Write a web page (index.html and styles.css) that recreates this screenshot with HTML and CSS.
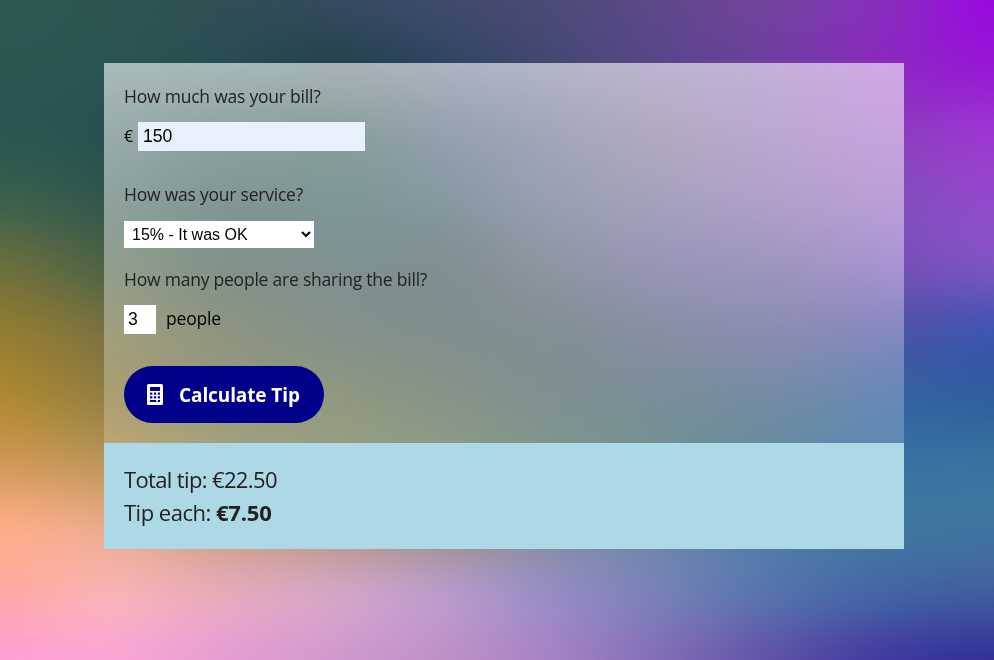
FILE: index.html
```html
<!DOCTYPE html>
<html lang="en">
<head>
<meta charset="utf-8">
<title>Tip Calculator</title>
<link rel="stylesheet" href="styles.css">
</head>
<body>
<canvas class="backdrop" width="994" height="660"></canvas>
<main class="calculator">
  <form class="form">
    <label class="label" for="bill">How much was your bill?</label>
    <div class="row row-bill"><span class="currency">€</span><input class="input input-bill" id="bill" type="text" value="150"></div>
    <label class="label label-service" for="service">How was your service?</label>
    <div class="row row-service">
      <select class="select" id="service"><option>15% - It was OK</option></select>
    </div>
    <label class="label label-share" for="people">How many people are sharing the bill?</label>
    <div class="row row-people"><input class="input input-people" id="people" type="text" value="3"><span class="people">people</span></div>
    <button class="button" type="button">
      <svg class="icon" viewBox="0 0 16 21" width="16" height="21" aria-hidden="true">
        <path fill="#fff" fill-rule="evenodd" d="M1.6 0h12.8A1.6 1.6 0 0 1 16 1.6v17.8a1.6 1.6 0 0 1-1.6 1.6H1.6A1.6 1.6 0 0 1 0 19.4V1.6A1.6 1.6 0 0 1 1.6 0zM3 3v4h10V3zM3 8.5v2.2h2.4v-2.2zM7 8.5v2.2h2.2v-2.2zM10.8 8.5v2.2H13v-2.2zM3 12.3v2.2h2.4v-2.2zM7 12.3v2.2h2.2v-2.2zM10.8 12.3v2.2H13v-2.2zM3 16v2h6.2v-2zM10.8 16v2H13v-2z"/>
      </svg>
      <span class="button-text">Calculate Tip</span>
    </button>
  </form>
  <section class="results">
    <p class="result"><span class="total">Total tip: €22.50</span></p>
    <p class="result"><span class="each">Tip each: </span><strong class="amount">€7.50</strong></p>
  </section>
</main>
<script src="backdrop.js"></script>
</body>
</html>
```
FILE: styles.css
```css
* { box-sizing: border-box; }
body { margin: 0; height: 660px; overflow: hidden; background: #5d6788; font-family: "Open Sans", "Noto Sans", sans-serif; }
.backdrop { position: absolute; inset: 0; z-index: -1; width: 100%; height: 100%; }
.calculator { width: 800px; margin: 63px 0 0 104px; }
.form { height: 380px; padding: 20px; display: flex; flex-direction: column; align-items: flex-start; background: linear-gradient(rgba(255,255,255,.6), rgba(255,255,255,.2)); }
.label { height: 27px; line-height: 27px; font-size: 17.5px; font-weight: 400; letter-spacing: -.22px; color: #222; white-space: nowrap; }
.row { display: flex; align-items: center; font-size: 17.5px; color: #000; }
.row-bill { height: 29px; margin-top: 12px; }
.currency { width: 14px; font-size: 16px; padding-bottom: 2px; }
.input { height: 29px; border: 0; padding: 0 5px; font: 17.6px "Liberation Sans", sans-serif; color: #000; background: #fff; }
.input-bill { width: 227px; background: #e8f0fe; }
.label-service { margin-top: 30px; }
.row-service { height: 27px; margin-top: 13px; }
.select { width: 190px; height: 27px; border: 0; border-radius: 0; padding: 0 4px; font: 16px "Liberation Sans", sans-serif; color: #000; background: #fff; }
.label-share { margin-top: 18px; }
.row-people { height: 29px; margin-top: 12px; }
.input-people { width: 32px; padding: 0 4px; }
.people { margin-left: 10px; padding-bottom: 3px; letter-spacing: -.2px; }
.button { width: 200px; height: 57px; margin-top: 32px; padding: 0 0 0 23px; display: flex; flex: none; align-items: center; border: 0; border-radius: 29px; background: #00008b; color: #fff; font: 700 19px "Open Sans", "Noto Sans", sans-serif; letter-spacing: -.1px; white-space: nowrap; }
.icon { flex: none; margin-right: 16px; }
.results { height: 106px; padding: 20px; background: #add8e6; }
.result { margin: 0; height: 33px; line-height: 33px; font-size: 22px; color: #222; white-space: pre; }
.total { letter-spacing: -.64px; }
.each { letter-spacing: -.5px; }
.amount { letter-spacing: -.2px; }
```
FILE: backdrop.js
```js
// Colour mesh: evenly spaced control colours, 10 columns by 11 rows.
const mesh = [
  [[46,88,84],[45,85,82],[48,78,84],[52,74,94],[62,75,106],[75,74,120],[95,72,138],[115,65,158],[135,45,190],[152,10,222]],
  [[43,86,82],[42,84,82],[38,76,80],[34,66,76],[46,68,96],[66,72,115],[90,70,138],[110,62,160],[138,42,190],[150,24,213]],
  [[43,86,82],[38,80,77],[20,62,58],[10,55,50],[29,59,84],[60,71,107],[92,75,128],[113,71,156],[135,62,187],[156,54,208]],
  [[60,96,74],[48,85,76],[26,65,61],[21,65,65],[34,67,83],[65,80,113],[89,83,135],[113,80,157],[128,78,182],[146,72,204]],
  [[105,110,62],[75,98,68],[51,80,64],[47,77,75],[47,74,80],[70,84,105],[87,84,136],[97,84,149],[113,80,178],[125,84,192]],
  [[145,124,50],[118,113,65],[89,101,69],[74,95,83],[69,92,89],[71,92,101],[79,92,123],[83,89,142],[77,83,162],[65,85,175]],
  [[175,136,50],[145,127,68],[120,120,82],[108,119,86],[94,114,95],[84,108,109],[78,105,121],[70,102,135],[55,98,158],[48,94,160]],
  [[208,152,85],[185,150,90],[150,145,98],[132,140,105],[120,135,112],[103,128,118],[85,122,128],[68,115,140],[58,112,160],[58,114,160]],
  [[252,172,135],[232,170,140],[200,158,135],[180,150,135],[155,145,138],[130,140,155],[105,132,165],[78,124,165],[65,118,158],[64,116,160]],
  [[255,168,165],[248,178,180],[230,170,185],[212,165,195],[185,155,200],[150,140,195],[118,128,182],[86,114,172],[68,100,165],[64,92,158]],
  [[255,160,210],[250,165,213],[230,158,210],[210,153,205],[190,144,200],[165,130,195],[130,108,182],[95,82,168],[65,60,158],[52,50,150]]
];
const canvas = document.querySelector(".backdrop");
const ctx = canvas.getContext("2d");
const image = ctx.createImageData(canvas.width, canvas.height);
const clamp = (v, max) => Math.max(0, Math.min(max, v));
const weights = t => [(-t + 2*t*t - t*t*t)/2, (2 - 5*t*t + 3*t*t*t)/2, (t + 4*t*t - 3*t*t*t)/2, (-t*t + t*t*t)/2];
for (let y = 0; y < canvas.height; y++) {
  const v = y / (canvas.height - 1) * 10, row = Math.floor(v), wy = weights(v - row);
  for (let x = 0; x < canvas.width; x++) {
    const u = x / (canvas.width - 1) * 9, col = Math.floor(u), wx = weights(u - col);
    let r = 0, g = 0, b = 0;
    for (let j = 0; j < 4; j++) for (let i = 0; i < 4; i++) {
      const c = mesh[clamp(row + j - 1, 10)][clamp(col + i - 1, 9)], w = wx[i] * wy[j];
      r += c[0] * w; g += c[1] * w; b += c[2] * w;
    }
    image.data.set([r, g, b, 255], (y * canvas.width + x) * 4);
  }
}
ctx.putImageData(image, 0, 0);
```
